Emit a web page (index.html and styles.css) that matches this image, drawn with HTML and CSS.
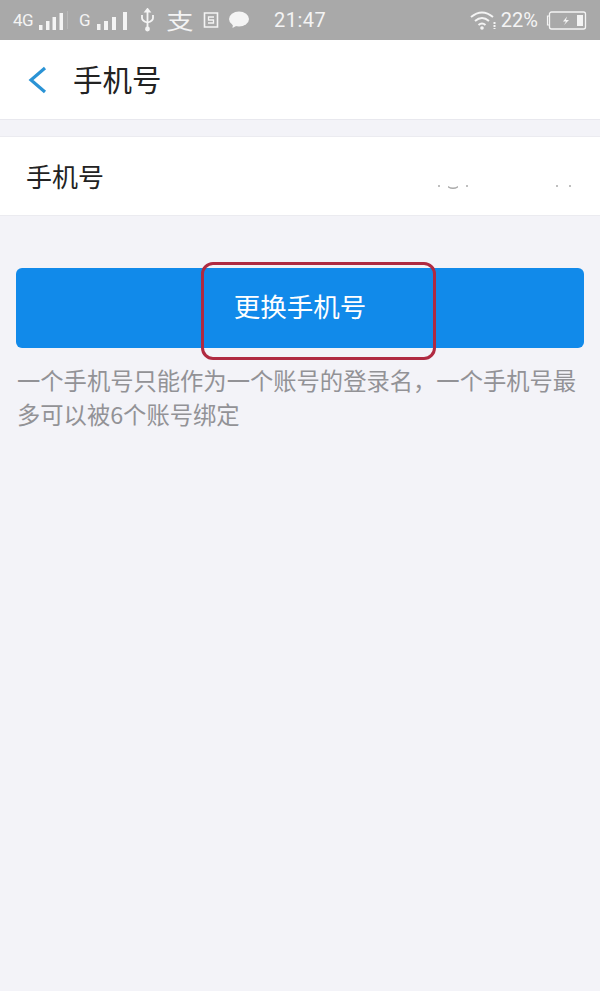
FILE: index.html
```html
<!DOCTYPE html>
<html lang="zh-CN">
<head>
    <meta charset="UTF-8">
    <meta name="viewport" content="width=device-width, initial-scale=1.0">
    <title>手机号</title>
    <link rel="stylesheet" href="styles.css">
</head>
<body>
    <div class="status-bar">
        <div class="status-left">
            <span class="net">4G</span>
            <svg class="bars-a" width="24" height="17" viewBox="0 0 24 17" fill="#f4f4f4"><rect x="0" y="12" width="3.500" height="5"/><rect x="7" y="8" width="3.500" height="9"/><rect x="13.500" y="4" width="3.500" height="13"/><rect x="20.500" y="0" width="3.500" height="17"/></svg>
            <span class="sim-line"></span>
            <span class="net net-g">G</span>
            <svg class="bars-b" width="30" height="18" viewBox="0 0 30 18" fill="#f4f4f4"><rect x="0" y="12" width="3.500" height="6"/><rect x="7" y="9" width="4" height="9"/><rect x="15" y="5" width="4" height="13"/><rect x="26" y="0" width="4" height="18"/></svg>
            <svg class="usb" width="15" height="24" viewBox="0 0 15 24" fill="none" stroke="#f4f4f4" stroke-width="1.800"><path d="M7.500 3v17"/><path d="M2 7v3q0 3 5.500 4.500q5.500-1.500 5.500-4.500V7"/><path d="M5.500 3.500 7.500 1l2 2.500z" fill="#f4f4f4"/><circle cx="7.500" cy="21" r="1.500" fill="#f4f4f4"/></svg>
            <span class="pay">支</span>
            <svg class="pay-s" width="16" height="16" viewBox="0 0 16 16" fill="none" stroke="#f4f4f4" stroke-width="1.600"><path d="M1.500 1h13v14h-13z"/><path d="M11 5H5.500v3h5v3H5" stroke-width="1.300"/></svg>
            <svg class="chat" width="20" height="18" viewBox="0 0 20 18" fill="#f4f4f4"><ellipse cx="10" cy="8" rx="10" ry="7.500"/><path d="M4 12 3.500 17 9 14z"/></svg>
            <span class="clock">21:47</span>
        </div>
        <div class="status-right">
            <svg class="wifi" width="26" height="20" viewBox="0 0 26 20" fill="none" stroke="#f4f4f4" stroke-width="2"><path d="M1 7q11-9 22 0"/><path d="M5 11q7-6 14 0"/><path d="M8.500 15q3.500-3 7 0"/><circle cx="12" cy="18" r="1.800" fill="#f4f4f4" stroke="none"/><path d="M24.500 12v7" stroke-dasharray="2 1"/></svg>
            <span class="percent">22%</span>
            <svg class="battery" width="41" height="19" viewBox="0 0 41 19" fill="none"><path d="M3 5H1.500v9H3" stroke="#f4f4f4" stroke-width="1.200"/><rect x="3.500" y="1" width="36" height="17" rx="2" stroke="#f4f4f4" stroke-width="1.300"/><rect x="31" y="4" width="6" height="11" fill="#f4f4f4"/><path d="M21 5.500l-4 5h3l-2 3.500 5-5h-3z" fill="#f4f4f4"/></svg>
        </div>
    </div>

    <div class="header">
        <svg class="back" width="20" height="28" viewBox="0 0 20 28" fill="none" stroke="#2a93d5" stroke-width="3.200"><path d="M18 2 4 14l14 12"/></svg>
        <h1>手机号</h1>
    </div>

    <div class="row">
        <span class="row-label">手机号</span>
        <svg class="row-marks" width="136" height="8" viewBox="0 0 136 8" fill="#aaa"><circle cx="2" cy="3" r="1"/><path d="M11 3q5 3 10 0v1.500q-5 3-10 0z"/><circle cx="30" cy="3" r="1"/><circle cx="120" cy="3" r="1"/><circle cx="133" cy="3" r="1"/></svg>
    </div>

    <div class="content">
        <div class="btn-wrap">
            <button class="change-btn">更换手机号</button>
            <div class="red-box"></div>
        </div>
        <p class="hint">一个手机号只能作为一个账号的登录名，一个手机号最多可以被6个账号绑定</p>
    </div>
</body>
</html>
```

FILE: styles.css
```css
html, body {
    height: 100%;
}

body {
    margin: 0;
    background-color: #f3f3f8;
    font-family: "Noto Sans CJK SC", "Liberation Sans", sans-serif;
    overflow: hidden;
}

.status-bar {
    height: 40px;
    background-color: #a9a9a9;
    color: #f4f4f4;
    display: flex;
    justify-content: space-between;
    align-items: center;
    padding: 0 13px;
    box-sizing: border-box;
    font-family: "Roboto", "Liberation Sans", sans-serif;
}

.status-left, .status-right {
    display: flex;
    align-items: center;
}

.status-bar svg {
    flex-shrink: 0;
}

.net {
    font-size: 17px;
    width: 21px;
    letter-spacing: -0.5px;
}

.bars-a {
    margin-left: 5px;
    margin-top: 3px;
}

.sim-line {
    width: 1px;
    height: 18px;
    margin-left: 4px;
    background-color: #b8b8b8;
}

.net-g {
    width: 12px;
    margin-left: 11px;
}

.bars-b {
    margin-left: 6px;
    margin-top: 2px;
}

.usb {
    margin-left: 13px;
}

.pay {
    width: 26px;
    margin-left: 12px;
    font-size: 26px;
    line-height: 30px;
    font-family: "Noto Sans CJK SC", sans-serif;
    transform: scale(1.050, 0.850);
}

.pay-s {
    margin-left: 10px;
}

.chat {
    margin-left: 10px;
}

.clock {
    margin-left: 25px;
    font-size: 20px;
    letter-spacing: 0.5px;
}

.wifi {
    margin-right: 5px;
}

.percent {
    font-size: 20px;
    margin-right: 8px;
}

.header {
    height: 79px;
    background-color: #fff;
    border-bottom: 1px solid #e8e8ee;
    display: flex;
    align-items: center;
    padding-left: 27px;
}

.header h1 {
    margin: 0 0 4px 26px;
    font-size: 29.500px;
    font-weight: 400;
    color: #222;
}

.row {
    height: 78px;
    margin-top: 16px;
    background-color: #fff;
    border-top: 1px solid #ebebf0;
    border-bottom: 1px solid #ebebf0;
    display: flex;
    justify-content: space-between;
    align-items: center;
    padding: 0 27px 0 26px;
}

.row-label {
    margin-bottom: 2px;
    font-size: 26px;
    color: #222;
}

.row-marks {
    margin-top: 22px;
}

.content {
    padding: 52px 16px 0;
}

.btn-wrap {
    position: relative;
}

.change-btn {
    display: block;
    width: 100%;
    height: 80px;
    padding-bottom: 6px;
    border: none;
    border-radius: 6px;
    background-color: #118aea;
    color: #fff;
    font-family: inherit;
    font-size: 26.500px;
}

/* red annotation drawn over the button */
.red-box {
    position: absolute;
    left: 185px;
    top: -6px;
    width: 229px;
    height: 92px;
    border: 3px solid #b02a41;
    border-radius: 12px;
}

.hint {
    margin: 15px 0 0 1px;
    font-size: 23.300px;
    line-height: 34px;
    color: #929296;
}
```
